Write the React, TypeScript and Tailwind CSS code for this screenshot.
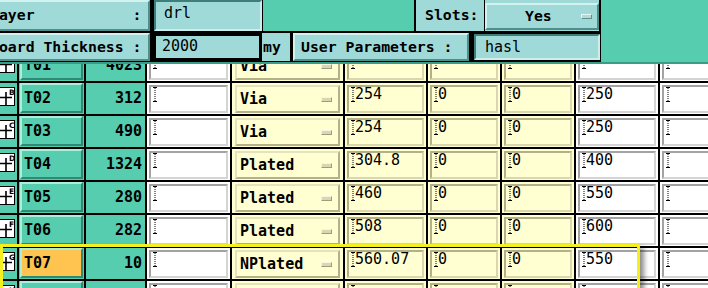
import React from 'react'

type Row = {
  id: string
  tag: string
  count: string
  kind: string
  size: string
  plus: string
  minus: string
  finish: string
  active?: boolean
}

const rows: Row[] = [
  { id: 'T01', tag: 'A', count: '4023', kind: 'Via', size: '', plus: '', minus: '', finish: '' },
  { id: 'T02', tag: 'B', count: '312', kind: 'Via', size: '254', plus: '0', minus: '0', finish: '250' },
  { id: 'T03', tag: 'C', count: '490', kind: 'Via', size: '254', plus: '0', minus: '0', finish: '250' },
  { id: 'T04', tag: 'D', count: '1324', kind: 'Plated', size: '304.8', plus: '0', minus: '0', finish: '400' },
  { id: 'T05', tag: 'E', count: '280', kind: 'Plated', size: '460', plus: '0', minus: '0', finish: '550' },
  { id: 'T06', tag: 'F', count: '282', kind: 'Plated', size: '508', plus: '0', minus: '0', finish: '600' },
  { id: 'T07', tag: 'G', count: '10', kind: 'NPlated', size: '560.07', plus: '0', minus: '0', finish: '550', active: true },
  { id: 'T08', tag: 'H', count: '', kind: 'Plated', size: '', plus: '', minus: '', finish: '' },
]

const Caret = () => (
  <svg width="4" height="15" viewBox="0 0 4 15" className="shrink-0">
    <path d="M0 0.5h4M0 14.5h4" stroke="#000" strokeWidth="1" />
    <path d="M2 1v13" stroke="#000" strokeWidth="1" strokeDasharray="1 1" />
  </svg>
)

const DrillIcon = ({ tag }: { tag: string }) => (
  <svg width="16" height="19" viewBox="0 0 16 19" className="ml-[-1px] mt-[4px]">
    <rect x="0.5" y="0.5" width="15" height="18" fill="#fff" stroke="#000" />
    <path d="M7 5v13M1 10.5h12" stroke="#000" strokeWidth="1.6" />
    <text x="10" y="7.5" fontSize="7.5" fontFamily="DejaVu Sans" fontWeight="bold" fill="#000">
      {tag}
    </text>
  </svg>
)

const Field = ({ value, yellow }: { value: string; yellow?: boolean }) => (
  <div
    className={`flex h-full w-full items-start border-2 pl-[2px] text-[15px] leading-[15px] ${
      yellow
        ? 'border-t-[#b3b08a] border-l-[#b3b08a] border-b-[#dad7b0] border-r-[#dad7b0] bg-[#ffffd2]'
        : 'border-t-[#a3a3a3] border-l-[#a3a3a3] border-b-[#d4d4d4] border-r-[#d4d4d4] bg-white'
    }`}
  >
    <Caret />
    <span className="whitespace-pre">{value}</span>
  </div>
)

const HeadButton = ({ label, className }: { label: string; className: string }) => (
  <div
    className={`flex h-full items-center border-2 border-t-[#d2f2f0] border-l-[#d2f2f0] border-b-[#4f8f8b] border-r-[#4f8f8b] bg-[#9fdad9] font-bold whitespace-pre ${className}`}
  >
    {label}
  </div>
)

const HeadField = ({ value, className }: { value: string; className: string }) => (
  <div
    className={`flex h-full items-start gap-[1px] border-2 border-t-[#3f7e7a] border-l-[#3f7e7a] border-b-[#cdeeed] border-r-[#cdeeed] bg-[#9fdad9] pl-[6px] pt-[3px] text-[15px] leading-[17px] ${className}`}
  >
    {value}
  </div>
)

export default function App() {
  return (
    <div className="relative h-[288px] w-[708px] overflow-hidden bg-[#56cdae] font-['DejaVu_Sans_Mono',monospace] text-black">
      <div className="ml-[-14px] text-[14.8px]">
        <div className="flex h-[31px]">
          <div className="flex h-full gap-[4px] bg-black pr-[1px]">
            <HeadButton label="Layer           :" className="w-[164px] pl-[2px] h-[30px]" />
            <HeadField value="drl" className="w-[108px] !pl-[8px]" />
          </div>
          <div className="ml-[151px] flex h-full gap-[1px] border-x-2 border-black bg-black">
            <div className="flex h-full w-[68px] items-center bg-[#9fdad9] pl-[9px] font-bold">Slots:</div>
            <div className="flex h-full w-[114px] bg-[#9fdad9] pt-[3px] pb-[1px]">
              <div className="flex w-full items-center justify-between border-2 border-t-[#d2f2f0] border-l-[#d2f2f0] border-b-[#4f8f8b] border-r-[#4f8f8b] pl-[38px] pr-[5px] font-bold">
                <span>Yes</span>
                <span className="h-[5px] w-[11px] border border-t-[#e4f6f6] border-l-[#e4f6f6] border-b-[#5d918d] border-r-[#5d918d] bg-[#b9d6d6]" />
              </div>
            </div>
          </div>
        </div>
        <div className="flex h-[31px] w-[615px] bg-black pt-[2px] pb-[1px]">
          <HeadButton label="Board Thickness :" className="w-[164px] pl-[2px]" />
          <div className="ml-[3px] h-full w-[109px] border-[3px] border-black bg-[#9fdad9] pl-[6px] pt-[2px] text-[15px] leading-[17px]">
            2000
          </div>
          <div className="flex h-full w-[28px] items-center bg-[#9fdad9] pl-[1px] font-bold">my</div>
          <HeadButton label="User Parameters :" className="ml-[3px] w-[176px] pl-[6px]" />
          <div className="ml-[4px] h-full w-[128px] border border-black">
            <HeadField value="hasl" className="w-full !pl-[9px]" />
          </div>
        </div>
      </div>
      <div className="h-[2px] bg-[#3a9c86]" />
      <div className="h-[224px] overflow-hidden">
        <div className="mt-[-14px] flex flex-col gap-[2px] bg-black">
          {rows.map((r) => (
            <div key={r.id} className="flex h-[31px] gap-[2px]">
              <div className="w-[17px] shrink-0 overflow-hidden bg-[#56cdae]">
                <DrillIcon tag={r.tag} />
              </div>
              <div className="w-[65px] shrink-0 bg-[#56cdae] pl-[1px] pr-[1px] pb-[1px]">
                <div
                  className={`flex h-full items-center border-2 border-t-[#a9efdc] border-l-[#a9efdc] border-b-[#2e8a72] border-r-[#2e8a72] pl-[2px] text-[15px] font-bold ${
                    r.active ? 'bg-[#fec44f]' : 'bg-[#56cdae]'
                  }`}
                >
                  {r.id}
                </div>
              </div>
              <div className="flex w-[59px] shrink-0 items-center justify-end bg-[#56cdae] pr-[3px] text-[15px] font-bold">
                {r.count}
              </div>
              <div className="w-[83px] shrink-0 bg-white p-[2px] pb-[1px]">
                <Field value="" />
              </div>
              <div className="w-[111px] shrink-0 bg-[#ffffd2] px-[3px] pt-[2px] pb-[1px]">
                <div className="flex h-full items-center justify-between border-2 border-t-[#e4e2bf] border-l-[#e4e2bf] border-b-[#b3b08a] border-r-[#b3b08a] pl-[3px] pr-[6px] text-[15px] font-bold">
                  <span>{r.kind}</span>
                  <span className="h-[5px] w-[11px] border border-t-[#f6f5e4] border-l-[#f6f5e4] border-b-[#9f9c78] border-r-[#9f9c78] bg-[#d9d6b4]" />
                </div>
              </div>
              <div className="w-[81px] shrink-0 bg-[#ffffd2] p-[2px] pb-[1px]">
                <Field value={r.size} yellow />
              </div>
              <div className="w-[72px] shrink-0 bg-[#ffffd2] p-[2px] pb-[1px]">
                <Field value={r.plus} yellow />
              </div>
              <div className="w-[72px] shrink-0 bg-[#ffffd2] p-[2px] pb-[1px]">
                <Field value={r.minus} yellow />
              </div>
              <div className="w-[82px] shrink-0 bg-white p-[2px] pb-[1px]">
                <Field value={r.finish} />
              </div>
              <div className="w-[80px] shrink-0 bg-white p-[2px] pb-[1px]">
                <Field value="" />
              </div>
            </div>
          ))}
        </div>
      </div>
      <div className="absolute left-0 top-[244px] h-[50px] w-[640px] border-[3px] border-[#f4ef1e] shadow-[4px_4px_5px_rgba(0,0,0,0.45)]" />
    </div>
  )
}
